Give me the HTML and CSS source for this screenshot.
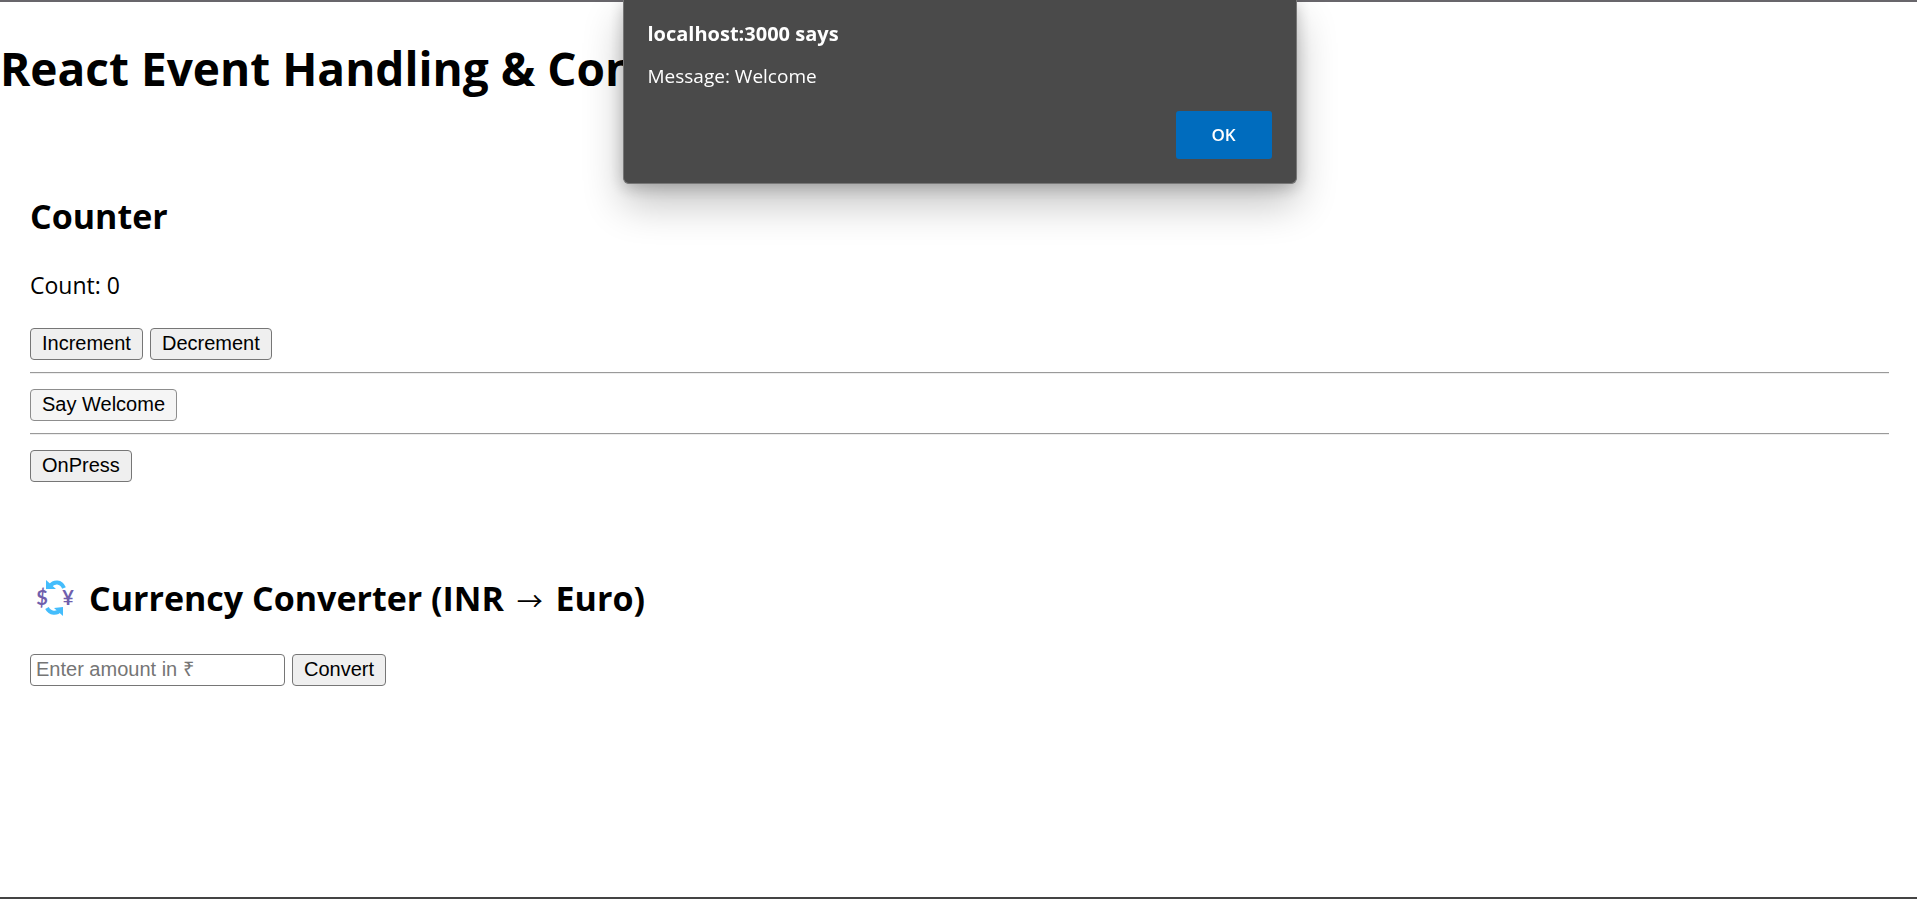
FILE: index.html
```html
<!DOCTYPE html>
<html lang="en">
<head>
<meta charset="utf-8">
<title>React App</title>
<link rel="stylesheet" href="styles.css">
</head>
<body>
<main class="app">
  <h1 class="title">React Event Handling &amp; Con</h1>
  <section class="panel events">
    <h2 class="heading">Counter</h2>
    <p class="count">Count: 0</p>
    <div class="row">
      <button class="btn" type="button">Increment</button>
      <button class="btn" type="button">Decrement</button>
    </div>
    <hr class="rule">
    <div class="row"><button class="btn btn-active" type="button">Say Welcome</button></div>
    <hr class="rule">
    <div class="row"><button class="btn" type="button">OnPress</button></div>
  </section>
  <section class="panel converter">
    <h2 class="heading">
      <svg class="exchange" viewBox="0 0 50 44" aria-hidden="true">
        <g fill="none" stroke="#44bdfc" stroke-width="4">
          <path d="M20 10C24 5 31 5 34 12"/>
          <path d="M17 32C20 38 27 38 30 34"/>
        </g>
        <path fill="#44bdfc" d="M16 4v9h10zM33 31v9l-9-8z"/>
        <g class="exchange-sign">
          <text x="12" y="29">$</text>
          <text x="38" y="29">¥</text>
        </g>
      </svg>
      <span>Currency Converter (INR <span class="arrow">→</span> Euro)</span>
    </h2>
    <form class="row">
      <input class="amount" type="text" placeholder="Enter amount in ₹" aria-label="Enter amount in ₹">
      <button class="btn" type="button">Convert</button>
    </form>
  </section>
</main>
<dialog class="alert" open aria-labelledby="origin">
  <h2 class="alert-title" id="origin">localhost:3000 says</h2>
  <p class="alert-text">Message: Welcome</p>
  <div class="alert-actions"><button class="ok" type="button">OK</button></div>
</dialog>
</body>
</html>
```
FILE: styles.css
```css
* { box-sizing: border-box; }
body {
  margin: 0;
  background: #fff;
  color: #000;
  font-family: "Segoe UI", "Open Sans", "Noto Sans", sans-serif;
}
.app {
  min-height: 100vh;
  border-top: 2px solid #68666b;
  border-bottom: 2px solid #444;
}
.title {
  margin: 0;
  padding-top: 34px;
  font-size: 46px;
  line-height: 64px;
}
.panel { padding: 0 28px 0 30px; }
.events { padding-top: 92px; }
.converter { padding-top: 92px; }
.heading {
  display: flex;
  align-items: center;
  margin: 0;
  font-size: 34px;
  line-height: 48px;
}
.count {
  margin: 29px 0 27px;
  font-size: 23px;
  line-height: 32px;
}
.row { display: flex; gap: 7px; }
.btn, .amount {
  height: 32px;
  border: 1px solid #767676;
  border-radius: 4px;
  font: 20px/24px "Liberation Sans", Arial, sans-serif;
}
.btn {
  padding: 0 11px 2px;
  background: #efefef;
  color: #000;
}
.btn-active {
  background: #f5f5f5;
  border-color: #8d8d8d;
}
.rule {
  height: 2px;
  margin: 12px 0 15px;
  border: 0;
  border-top: 1px solid #9a9a9a;
  border-bottom: 1px solid #eee;
}
.exchange {
  width: 50px;
  height: 44px;
  margin-right: 9px;
}
.exchange-sign {
  fill: #6f5fad;
  font: 700 20px/24px Lato, sans-serif;
  text-anchor: middle;
}
.arrow {
  padding: 0 4px;
  font-family: "Noto Sans CJK JP", sans-serif;
  font-size: 26px;
  font-weight: 400;
  line-height: 1;
}
.converter .row { margin-top: 32px; }
.amount {
  width: 255px;
  padding: 0 5px 2px;
  background: #fff;
}
.amount::placeholder { color: #757575; }
.alert {
  position: fixed;
  top: 0;
  left: 2px;
  right: 0;
  width: 674px;
  max-width: 100%;
  margin: 0 auto;
  padding: 20px 24px 24px;
  border: 1px solid #777;
  border-top: 0;
  border-radius: 0 0 6px 6px;
  background: #4a4a4a;
  color: #fff;
  box-shadow: 0 20px 40px rgba(0, 0, 0, .24), 0 4px 16px rgba(0, 0, 0, .22);
}
.alert-title {
  margin: 0;
  font-size: 20px;
  line-height: 28px;
}
.alert-text {
  margin: 14px 0 21px;
  font-size: 19px;
  line-height: 28px;
}
.alert-actions { display: flex; justify-content: flex-end; }
.ok {
  width: 96px;
  height: 48px;
  border: 0;
  border-radius: 3px;
  background: #006cbe;
  color: #fff;
  font: 600 17px/24px "Segoe UI", "Open Sans", sans-serif;
}
```
